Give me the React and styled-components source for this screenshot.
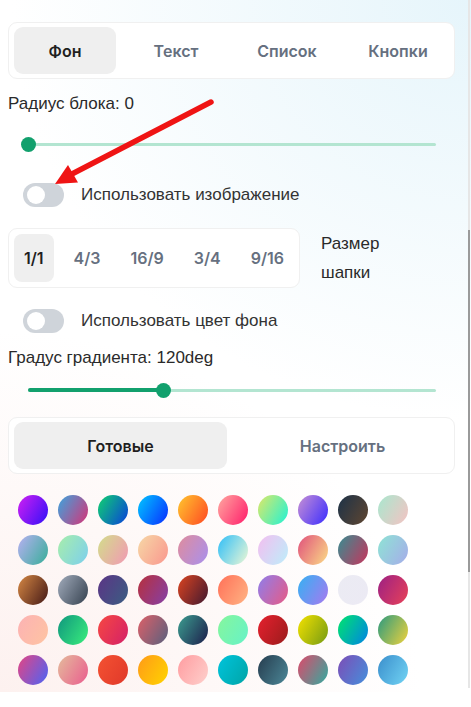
import React from "react";
import styled, { createGlobalStyle } from "styled-components";

const Global = createGlobalStyle`
  html, body { margin: 0; padding: 0; background: #ffffff; }
  body { font-family: "Liberation Sans", Arial, sans-serif; }
  * { box-sizing: border-box; }
`;

const Panel = styled.div`
  position: relative;
  width: 471px;
  padding: 22px 16px 7px 8px;
  display: flex;
  flex-direction: column;
  background:
    radial-gradient(ellipse 460px 420px at 100% 0%, #e6f5fb 0%, rgba(230,245,251,0) 100%),
    radial-gradient(ellipse 420px 360px at 0% 100%, #fdf1ef 0%, rgba(253,241,239,0) 100%),
    #ffffff;
`;

const TabBox = styled.div`
  display: flex;
  gap: 9px;
  padding: 4px 5px;
  border: 1px solid #f0f0f0;
  border-radius: 9px;
  background: #ffffff;
  margin-top: ${(p) => p.$mt || 0}px;
`;

const Tab = styled.div`
  flex: 1;
  height: 47px;
  display: flex;
  align-items: center;
  justify-content: center;
  border-radius: 9px;
  font-family: Inter, "Noto Sans", sans-serif;
  font-weight: 600;
  font-size: 16px;
  color: ${(p) => (p.$active ? "#1f1f1f" : "#667080")};
  background: ${(p) => (p.$active ? "#efefef" : "transparent")};
`;

const Label = styled.div`
  font-size: 17px;
  line-height: 18px;
  color: #2a2a2a;
  margin-top: ${(p) => p.$mt}px;
`;

const SliderWrap = styled.div`
  position: relative;
  height: 20px;
  margin: ${(p) => p.$mt}px 19px 0 20px;
  display: flex;
  align-items: center;
`;

const Track = styled.div`
  position: relative;
  width: 100%;
  height: 3px;
  border-radius: 2px;
  background: #b3e5d1;
`;

const Fill = styled.div`
  position: absolute;
  left: 0;
  top: -0.5px;
  height: 4px;
  border-radius: 2px;
  background: #12a06d;
`;

const Thumb = styled.div`
  position: absolute;
  top: 50%;
  width: 15px;
  height: 15px;
  margin: -7.5px 0 0 -7.5px;
  border-radius: 50%;
  background: #12a06d;
`;

const ToggleRow = styled.div`
  display: flex;
  align-items: center;
  gap: 17px;
  margin: ${(p) => p.$mt}px 0 0 15px;
`;

const Toggle = styled.div`
  position: relative;
  width: 41px;
  height: 24px;
  border-radius: 12px;
  background: #cfd4da;
  flex-shrink: 0;
  &::after {
    content: "";
    position: absolute;
    left: 4px;
    top: 3px;
    width: 18px;
    height: 18px;
    border-radius: 50%;
    background: #ffffff;
  }
`;

const ToggleText = styled.span`
  font-size: 17px;
  color: #333333;
`;

const AspectRow = styled.div`
  display: flex;
  align-items: center;
  gap: 21px;
  margin-top: ${(p) => p.$mt}px;
`;

const AspectBox = styled.div`
  display: flex;
  gap: 10px;
  padding: 5px;
  border: 1px solid #f0f0f0;
  border-radius: 9px;
  background: #ffffff;
`;

const AspectItem = styled.div`
  height: 48px;
  padding: 0 10px;
  display: flex;
  align-items: center;
  border-radius: 8px;
  font-family: Inter, "Noto Sans", sans-serif;
  font-weight: 600;
  font-size: 16px;
  color: ${(p) => (p.$active ? "#1f1f1f" : "#667080")};
  background: ${(p) => (p.$active ? "#efefef" : "transparent")};
`;

const SideText = styled.div`
  font-size: 17px;
  line-height: 29px;
  color: #2a2a2a;
`;

const Grid = styled.div`
  display: grid;
  grid-template-columns: repeat(10, 30px);
  gap: 10px;
  margin: ${(p) => p.$mt}px 0 0 10px;
`;

const Swatch = styled.div`
  width: 30px;
  height: 30px;
  border-radius: 50%;
  background: linear-gradient(120deg, ${(p) => p.$a}, ${(p) => p.$b});
`;

const ScrollTrack = styled.div`
  position: absolute;
  top: 0;
  right: 1px;
  width: 2px;
  height: 688px;
  background: #e6e6e6;
`;

const ScrollThumb = styled.div`
  position: absolute;
  top: 230px;
  left: 0;
  width: 2px;
  height: 342px;
  background: #9a9a9a;
`;

const ArrowSvg = styled.svg`
  position: absolute;
  left: 0;
  top: 0;
  pointer-events: none;
`;

const tabs = ["Фон", "Текст", "Список", "Кнопки"];
const aspects = ["1/1", "4/3", "16/9", "3/4", "9/16"];

const swatches = [
  ["#d21ff2", "#3010f8"], ["#3aa6df", "#d83276"], ["#0fd36f", "#0a3fdb"], ["#00c8ff", "#0a2cff"], ["#ffc72e", "#ff4722"],
  ["#ffa8a0", "#ff1c6a"], ["#dfe866", "#1ff2d6"], ["#c890d4", "#3a2cff"], ["#1c3248", "#604630"], ["#a8e8cf", "#f5c2c2"],
  ["#b8b0f2", "#36ae98"], ["#a8eeaa", "#7ccfee"], ["#d2de8a", "#f298b4"], ["#f6d8a6", "#fa968e"], ["#e08c9c", "#a890ee"],
  ["#2ebef8", "#eef8d4"], ["#f4bef0", "#bceefa"], ["#e0507c", "#fbdc86"], ["#368e92", "#c8345c"], ["#8ee4d4", "#a6acea"],
  ["#d68844", "#431816"], ["#a2acbc", "#34404e"], ["#5c3486", "#3a5e82"], ["#b8303c", "#8440a8"], ["#dc4420", "#401830"],
  ["#ff7058", "#ffb484"], ["#8e7eec", "#e85a84"], ["#34b2f2", "#a878f0"], ["#ebebf3", "#eceaf4"], ["#9c2084", "#e84258"],
  ["#fcb2b4", "#fec4a2"], ["#0f967e", "#3aee7c"], ["#f64842", "#d42068"], ["#de6068", "#58607e"], ["#3c9e90", "#1c1c4a"],
  ["#86f69c", "#66f2c8"], ["#e6202e", "#9a1c1c"], ["#f4e200", "#749a14"], ["#00e66c", "#0082e6"], ["#2a9a80", "#f0d23c"],
  ["#e64482", "#4a64f6"], ["#e4bc9c", "#ea5c8e"], ["#f45232", "#e0382a"], ["#ff9a18", "#ffd400"], ["#ff9ca0", "#fed0cc"],
  ["#00c4dc", "#00a4a6"], ["#263c4e", "#4c8898"], ["#e0486a", "#30aca0"], ["#7e4cb6", "#4490dc"], ["#3a8ecc", "#72d4f4"],
];

function Slider({ value, mt, filled }) {
  return (
    <SliderWrap $mt={mt}>
      <Track>
        {filled && <Fill style={{ width: `${value * 100}%` }} />}
        <Thumb style={{ left: `${value * 100}%` }} />
      </Track>
    </SliderWrap>
  );
}

export default function App() {
  return (
    <>
      <Global />
      <Panel>
        <TabBox>
          {tabs.map((t, i) => (
            <Tab key={t} $active={i === 0}>{t}</Tab>
          ))}
        </TabBox>

        <Label $mt={16}>Радиус блока: 0</Label>
        <Slider value={0} mt={21} />

        <ToggleRow $mt={29}>
          <Toggle />
          <ToggleText>Использовать изображение</ToggleText>
        </ToggleRow>

        <AspectRow $mt={21}>
          <AspectBox>
            {aspects.map((a, i) => (
              <AspectItem key={a} $active={i === 0}>{a}</AspectItem>
            ))}
          </AspectBox>
          <SideText>Размер<br />шапки</SideText>
        </AspectRow>

        <ToggleRow $mt={21}>
          <Toggle />
          <ToggleText>Использовать цвет фона</ToggleText>
        </ToggleRow>

        <Label $mt={16}>Градус градиента: 120deg</Label>
        <Slider value={120 / 360} mt={13} filled />

        <TabBox $mt={17}>
          <Tab $active>Готовые</Tab>
          <Tab>Настроить</Tab>
        </TabBox>

        <Grid $mt={21}>
          {swatches.map(([a, b], i) => (
            <Swatch key={i} $a={a} $b={b} />
          ))}
        </Grid>

        <ArrowSvg width="471" height="240" viewBox="0 0 471 240">
          <line x1="211" y1="102" x2="70" y2="175" stroke="#ef1414" strokeWidth="5.5" strokeLinecap="round" />
          <polygon points="55,184 68,165 78,182.5" fill="#ef1414" />
        </ArrowSvg>

        <ScrollTrack>
          <ScrollThumb />
        </ScrollTrack>
      </Panel>
    </>
  );
}
